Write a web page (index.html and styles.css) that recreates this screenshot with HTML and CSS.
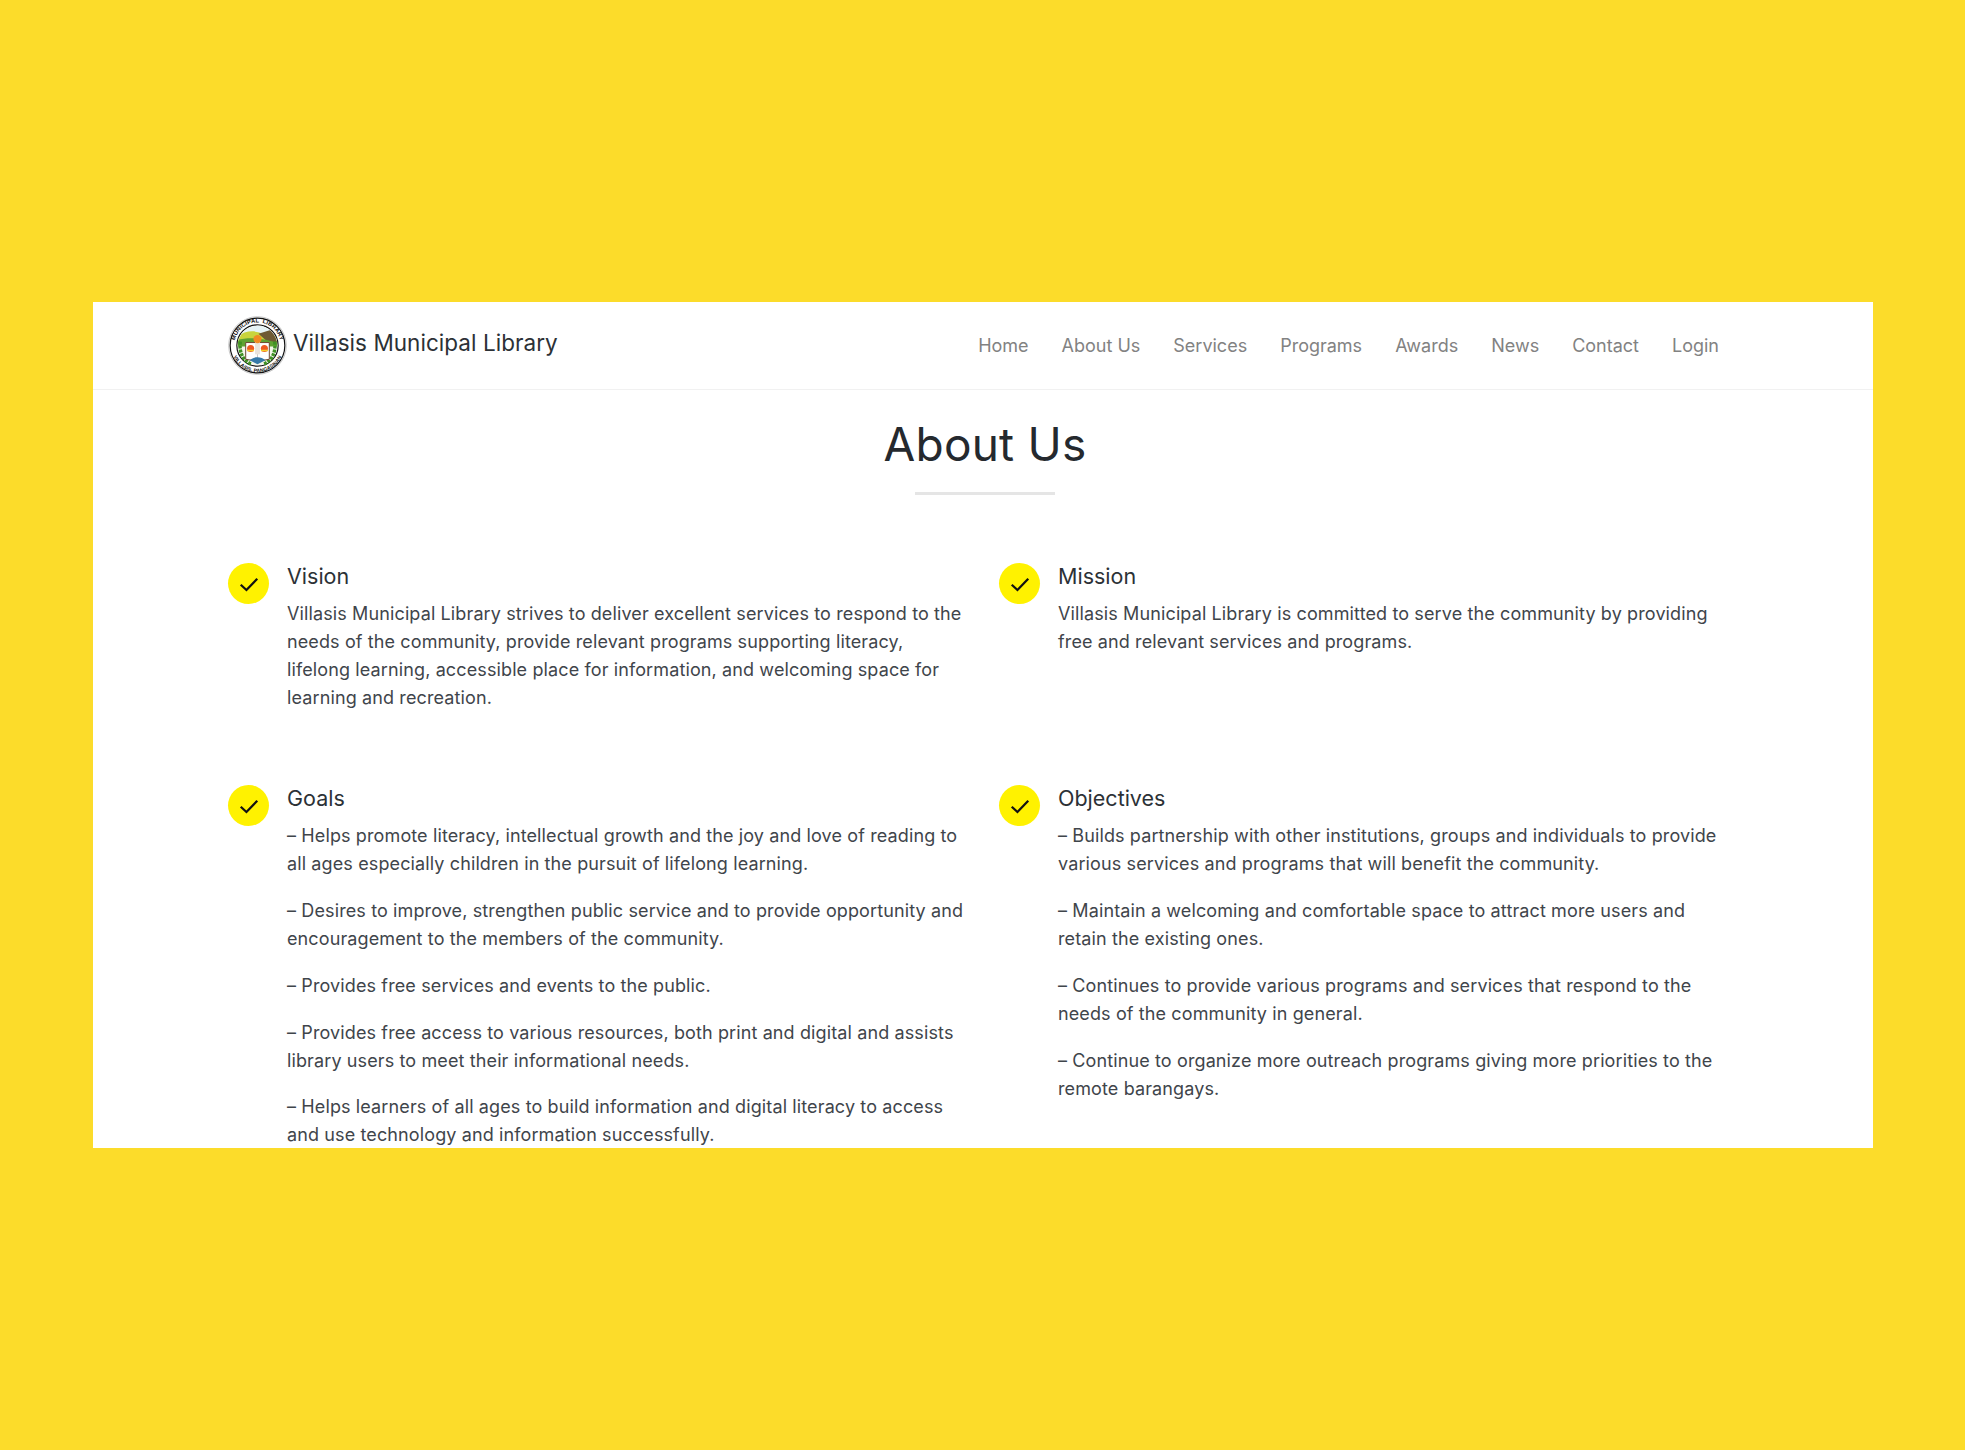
FILE: index.html
```html
<!DOCTYPE html>
<html lang="en">
<head>
<meta charset="utf-8">
<title>About Us - Villasis Municipal Library</title>
<link rel="stylesheet" href="styles.css">
</head>
<body>
<main class="panel">
  <header class="navbar">
    <a class="brand" href="#">
      <svg class="logo" viewBox="0 0 60 60" aria-hidden="true">
        <defs>
          <path id="arcTop" d="M6.500 30a23.500 23.500 0 0 1 47 0"/>
          <path id="arcBottom" d="M2.800 30a27.200 27.200 0 0 0 54.400 0"/>
          <clipPath id="inner"><circle cx="30" cy="30" r="20"/></clipPath>
        </defs>
        <circle cx="30" cy="30" r="29.300" fill="#fff" stroke="#c4c4c4"/>
        <circle cx="30" cy="30" r="27.800" fill="#fff" stroke="#111" stroke-width="1.200"/>
        <text class="logo-text"><textPath href="#arcTop" startOffset="50%" text-anchor="middle">MUNICIPAL  LIBRARY</textPath></text>
        <text class="logo-text logo-text-b"><textPath href="#arcBottom" startOffset="50%" text-anchor="middle">VILLASIS, PANGASINAN</textPath></text>
        <circle cx="30" cy="30" r="21" fill="#fff" stroke="#111" stroke-width="1.200"/>
        <g clip-path="url(#inner)">
          <rect x="8" y="8" width="44" height="44" fill="#f5f7ea"/>
          <rect x="8" y="8" width="44" height="13" fill="#e6f3f6"/>
          <path d="M8 22C18 14 28 14 37 19L52 19V30H8Z" fill="#c9d43c"/>
          <path d="M31 18L44 14L52 22V27H41Z" fill="#6f5a34"/>
          <path d="M8 25C20 21 36 22 52 28V31H8Z" fill="#5fa232"/>
        </g>
        <path d="M12.500 26C11 38 16 46 24 49M47.500 26C49 38 44 46 36 49" fill="none" stroke="#3f9124" stroke-width="3.500" stroke-dasharray="3 1"/>
        <path d="M18 27H42V44L30 46L18 44Z" fill="#fff" stroke="#6b4630" stroke-width="1"/>
        <path d="M30 28V46" stroke="#c7c7c7"/>
        <rect x="27.500" y="26" width="5" height="13" fill="#e9e4dc"/>
        <circle cx="30" cy="23.500" r="4.200" fill="#f08a22"/>
        <circle cx="23" cy="33" r="3.600" fill="#ee5a22"/>
        <circle cx="37" cy="33" r="3.600" fill="#ee5a22"/>
        <path d="M19.500 35H26.500M33.500 35H40.500" stroke="#f6cf2b" stroke-width="1.500"/>
        <path d="M22 45C26 41 34 41 38 45L30 49Z" fill="#3579a8"/>
      </svg>
      <span class="brand-name">Villasis Municipal Library</span>
    </a>
    <nav class="nav">
      <a href="#">Home</a>
      <a href="#">About Us</a>
      <a href="#">Services</a>
      <a href="#">Programs</a>
      <a href="#">Awards</a>
      <a href="#">News</a>
      <a href="#">Contact</a>
      <a href="#">Login</a>
    </nav>
  </header>

  <section class="about">
    <h1 class="title">About Us</h1>
    <div class="rule"></div>
    <div class="grid">
      <article class="item">
        <span class="check"><svg viewBox="0 0 16 16" aria-hidden="true"><path d="M2.500 8.500L6.300 12L13.500 4.500"/></svg></span>
        <div class="body">
          <h2>Vision</h2>
          <p>Villasis Municipal Library strives to deliver excellent services to respond to the needs of the community, provide relevant programs supporting literacy, lifelong learning, accessible place for information, and welcoming space for learning and recreation.</p>
        </div>
      </article>
      <article class="item">
        <span class="check"><svg viewBox="0 0 16 16" aria-hidden="true"><path d="M2.500 8.500L6.300 12L13.500 4.500"/></svg></span>
        <div class="body">
          <h2>Mission</h2>
          <p>Villasis Municipal Library is committed to serve the community by providing free and relevant services and programs.</p>
        </div>
      </article>
      <article class="item">
        <span class="check"><svg viewBox="0 0 16 16" aria-hidden="true"><path d="M2.500 8.500L6.300 12L13.500 4.500"/></svg></span>
        <div class="body">
          <h2>Goals</h2>
          <p>– Helps promote literacy, intellectual growth and the joy and love of reading to all ages especially children in the pursuit of lifelong learning.</p>
          <p>– Desires to improve, strengthen public service and to provide opportunity and encouragement to the members of the community.</p>
          <p>– Provides free services and events to the public.</p>
          <p>– Provides free access to various resources, both print and digital and assists library users to meet their informational needs.</p>
          <p>– Helps learners of all ages to build information and digital literacy to access and use technology and information successfully.</p>
        </div>
      </article>
      <article class="item">
        <span class="check"><svg viewBox="0 0 16 16" aria-hidden="true"><path d="M2.500 8.500L6.300 12L13.500 4.500"/></svg></span>
        <div class="body">
          <h2>Objectives</h2>
          <p>– Builds partnership with other institutions, groups and individuals to provide various services and programs that will benefit the community.</p>
          <p>– Maintain a welcoming and comfortable space to attract more users and retain the existing ones.</p>
          <p>– Continues to provide various programs and services that respond to the needs of the community in general.</p>
          <p>– Continue to organize more outreach programs giving more priorities to the remote barangays.</p>
        </div>
      </article>
    </div>
  </section>
</main>
</body>
</html>
```

FILE: styles.css
```css
* { box-sizing: border-box; }
html, body { height: 100%; }
body {
  margin: 0;
  padding-left: 1px;
  background: #fcdc2a;
  display: flex;
  align-items: center;
  justify-content: center;
  font-family: "Inter", "Noto Sans", sans-serif;
  color: #32383e;
}
.panel {
  width: 1780px;
  height: 846px;
  background: #fff;
  overflow: hidden;
}
.navbar {
  height: 88px;
  padding: 0 154px 0 135px;
  display: flex;
  align-items: center;
  justify-content: space-between;
  border-bottom: 1px solid #f1f1f1;
}
.brand {
  display: flex;
  align-items: center;
  gap: 6px;
  color: #2c3136;
  font-size: 22.500px;
  text-decoration: none;
  letter-spacing: 0.04px;
}
.brand-name { padding-bottom: 7px; }
.logo { width: 59px; height: 59px; }
.logo-text { font-family: "Liberation Sans", sans-serif; font-size: 6px; font-weight: 700; fill: #111; white-space: pre; }
.logo-text-b { font-size: 5.200px; }
.nav { display: flex; gap: 33px; }
.nav a { color: #828282; font-size: 18px; text-decoration: none; }
.about { padding-left: 135px; }
.title {
  margin: 24px 0 0;
  padding-right: 131px;
  text-align: center;
  font-size: 46px;
  line-height: 60px;
  font-weight: 400;
  letter-spacing: 0.2px;
  color: #25292e;
}
.rule { width: 140px; height: 3px; background: #e5e5e5; margin: 18px 0 0 687px; }
.grid {
  display: grid;
  grid-template-columns: 771px 771px;
  row-gap: 54.500px;
  margin-top: 68px;
}
.item { display: flex; gap: 18px; align-items: flex-start; padding-right: 32px; }
.check {
  flex: none;
  width: 41px;
  height: 41px;
  border-radius: 50%;
  background: #fff200;
  display: flex;
  align-items: center;
  justify-content: center;
}
.check svg { width: 24px; height: 24px; fill: none; stroke: #111; stroke-width: 1.500; }
.body { flex: 1; }
.body h2 { margin: 0 0 11px; font-size: 21.500px; line-height: 26px; font-weight: 400; color: #2c3136; }
.body p { margin: 0 0 18.800px; font-size: 18px; line-height: 28px; color: #3f454b; letter-spacing: 0.12px; }
```
